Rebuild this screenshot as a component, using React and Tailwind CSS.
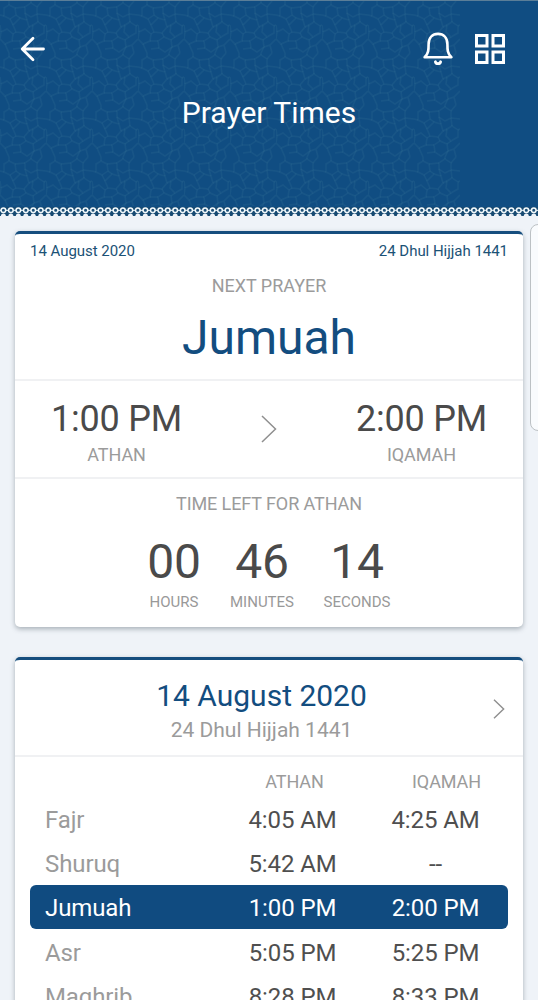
const rows = [
  { name: "Fajr", athan: "4:05 AM", iqamah: "4:25 AM" },
  { name: "Shuruq", athan: "5:42 AM", iqamah: "--" },
  { name: "Jumuah", athan: "1:00 PM", iqamah: "2:00 PM", active: true },
  { name: "Asr", athan: "5:05 PM", iqamah: "5:25 PM" },
  { name: "Maghrib", athan: "8:28 PM", iqamah: "8:33 PM" },
];

const loops = Array.from({ length: 73 }, (_, i) => 3.4 + i * 7.47);

function Chevron({ className, w, h, sw }) {
  return (
    <svg className={className} width={w} height={h} viewBox="0 0 16 28" fill="none" stroke="#8f8f8f" strokeWidth={sw}>
      <path d="M1 1 14.5 14 1 27" />
    </svg>
  );
}

function HeaderPattern() {
  return (
    <svg className="absolute left-0 top-0" width="538" height="215">
      <defs>
        <pattern id="tile" width="46" height="52" patternUnits="userSpaceOnUse">
          <g fill="none" stroke="#4b8aa5" strokeOpacity="0.13" strokeWidth="1.500">
            <path d="M9 4l6 3 1 7-6 4-6-3V7zM31 2l6 4v7l-6 3-6-4V6zM20 17l7 2 2 7-5 6-8-1-3-7zM38 21l6 4v7l-7 4-5-5 1-7zM7 28l6 5-1 7-7 3-5-5 1-7zM26 36l7 3 1 7-7 5-6-4-1-7z" />
            <path d="M16 14l4 3M25 12l2 7M29 26l4-2M24 32l2 4M13 33l3-2M10 18l3 6M15 7l10-1M37 13l1 8M34 46l-3 6M31 0v2M9 0v4M12 40l8 0M34 46l6-2 6-6M40 44l2 8M42 0l-5 6M37 13l9 1M0 14l4 1M44 25l2-1M0 24l1 7M37 36l-4 3M5 43l4 9M21 47l-8 1" />
          </g>
        </pattern>
      </defs>
      <rect width="460" height="205" fill="url(#tile)" />
      <rect y="206" width="538" height="9" fill="#174a72" />
      <path d="M0 209.300h538" stroke="#cfdfe8" strokeWidth="1.300" />
      {loops.map((x) => (
        <g key={x}>
          <circle cx={x} cy="209.300" r="2.300" fill="#1d5078" stroke="#f4fafc" strokeWidth="1.500" />
          <circle cx={x} cy="215" r="2.500" fill="#eff3f8" />
        </g>
      ))}
    </svg>
  );
}

function Unit({ value, label, className }) {
  return (
    <div className={"flex flex-col items-center " + className}>
      <span className="text-[48px] leading-[56px] tracking-[-0.2px] text-[#4a4a4a]">{value}</span>
      <span className="mt-[3px] text-[15px] leading-[18px] text-[#999]">{label}</span>
    </div>
  );
}

export default function App() {
  return (
    <div className="flex h-[1000px] w-[538px] flex-col overflow-hidden bg-[#eff3f8] font-['Roboto',sans-serif]">
      <header className="relative h-[216px] shrink-0 border-t border-[#5b7e98] bg-[#104d82] text-white">
        <HeaderPattern />
        <div className="relative flex h-[96px] items-center pl-[20px] pr-[32px]">
          <svg width="26" height="26" viewBox="0 0 26 26" fill="none" stroke="currentColor" strokeWidth="2.8" strokeLinecap="round" strokeLinejoin="round">
            <path d="M23.500 13H2.500M13 2.200 2.200 13 13 23.800" />
          </svg>
          <svg className="ml-auto" width="32" height="36" viewBox="0 0 32 36" fill="none" stroke="currentColor" strokeWidth="2.6" strokeLinejoin="round">
            <path d="M2.600 26.200C6.600 22.600 6.600 18.500 6.600 13.200C6.600 6.500 10.500 2.900 16 2.900S25.400 6.500 25.400 13.200C25.400 18.500 25.400 22.600 29.400 26.200Z" />
            <path d="M13.400 30.800C14 33.200 18 33.200 18.600 30.800" strokeWidth="2.8" strokeLinecap="round" />
          </svg>
          <svg className="ml-[21px]" width="31" height="32" viewBox="0 0 31 32" fill="none" stroke="currentColor" strokeWidth="3">
            <path d="M1.500 2.500h10.500v10.500H1.500zM18 2.500h10.500v10.500H18zM1.500 19h10.500v10.500H1.500zM18 19h10.500v10.500H18z" />
          </svg>
        </div>
        <h1 className="relative text-center text-[30px] leading-[31px]">Prayer Times</h1>
      </header>

      <main className="relative px-[15px] pt-[15px]">
        <div className="absolute left-[530px] top-[8px] h-[207px] w-[20px] rounded-[8px] border border-[#bcc1c4] bg-[#f9fbfd]" />
        <section className="h-[396px] rounded-[5px] border-t-[3px] border-[#164e7e] bg-white shadow-[0_2px_5px_rgba(60,75,85,0.4)]">
          <div className="flex h-[34px] justify-between px-[15px] pt-[8px] text-[15px] leading-[18px] tracking-[-0.03px] text-[#1b5276]">
            <span>14 August 2020</span>
            <span>24 Dhul Hijjah 1441</span>
          </div>
          <div className="flex h-[113px] flex-col items-center border-b-2 border-[#f0f1f3]">
            <span className="mt-[7px] text-[18px] leading-[22px] text-[#9b9b9b]">NEXT PRAYER</span>
            <span className="mt-[13px] text-[48px] leading-[56px] text-[#134d7f]">Jumuah</span>
          </div>
          <div className="flex h-[98px] justify-between border-b-2 border-[#f0f1f3] px-[36px] pt-[17px]">
            <div className="flex flex-col items-center">
              <span className="text-[36px] leading-[42px] tracking-[-0.2px] text-[#4a4a4a]">1:00 PM</span>
              <span className="mt-[4px] text-[18px] leading-[22px] tracking-[-0.1px] text-[#9b9b9b]">ATHAN</span>
            </div>
            <Chevron className="mt-[17px]" w="16" h="28" sw="1.500" />
            <div className="flex flex-col items-center">
              <span className="text-[36px] leading-[42px] tracking-[-0.2px] text-[#4a4a4a]">2:00 PM</span>
              <span className="mt-[4px] text-[18px] leading-[22px] tracking-[-0.1px] text-[#9b9b9b]">IQAMAH</span>
            </div>
          </div>
          <div className="flex flex-col items-center pt-[14px]">
            <span className="text-[18px] leading-[22px] tracking-[-0.1px] text-[#9b9b9b]">TIME LEFT FOR ATHAN</span>
            <div className="mt-[19px] flex">
              <Unit value="00" label="HOURS" className="w-[88px]" />
              <Unit value="46" label="MINUTES" className="w-[88px]" />
              <Unit value="14" label="SECONDS" className="w-[102px]" />
            </div>
          </div>
        </section>

        <section className="mt-[30px] h-[420px] rounded-[5px] border-t-[3px] border-[#164e7e] bg-white shadow-[0_2px_5px_rgba(60,75,85,0.4)]">
          <div className="relative flex h-[97px] flex-col items-center border-b-2 border-[#f0f1f3] pr-[15px] pt-[18px]">
            <span className="text-[30px] leading-[36px] text-[#134d7f]">14 August 2020</span>
            <span className="mt-[3px] text-[21px] leading-[26px] text-[#9b9b9b]">24 Dhul Hijjah 1441</span>
            <Chevron className="absolute right-[18px] top-[39px]" w="12" h="20" sw="2" />
          </div>
          <div className="flex h-[39px] pt-[14px] text-[18px] leading-[22px] tracking-[-0.1px] text-[#9b9b9b]">
            <span className="ml-[208px] w-[143px] text-center">ATHAN</span>
            <span className="ml-[9px] w-[143px] text-center">IQAMAH</span>
          </div>
          {rows.map((r) => (
            <div
              key={r.name}
              className={
                "mx-[15px] flex h-[44.300px] items-center rounded-[6px] pl-[15px] pt-[3px] text-[24px] tracking-[-0.1px] " +
                (r.active ? "bg-[#104b80] text-white" : "text-[#4f4f4f]")
              }
            >
              <span className={r.active ? "w-[176px]" : "w-[176px] text-[#9b9b9b]"}>{r.name}</span>
              <span className="w-[143px] text-center">{r.athan}</span>
              <span className="w-[143px] text-center">{r.iqamah}</span>
            </div>
          ))}
        </section>
      </main>
    </div>
  );
}
